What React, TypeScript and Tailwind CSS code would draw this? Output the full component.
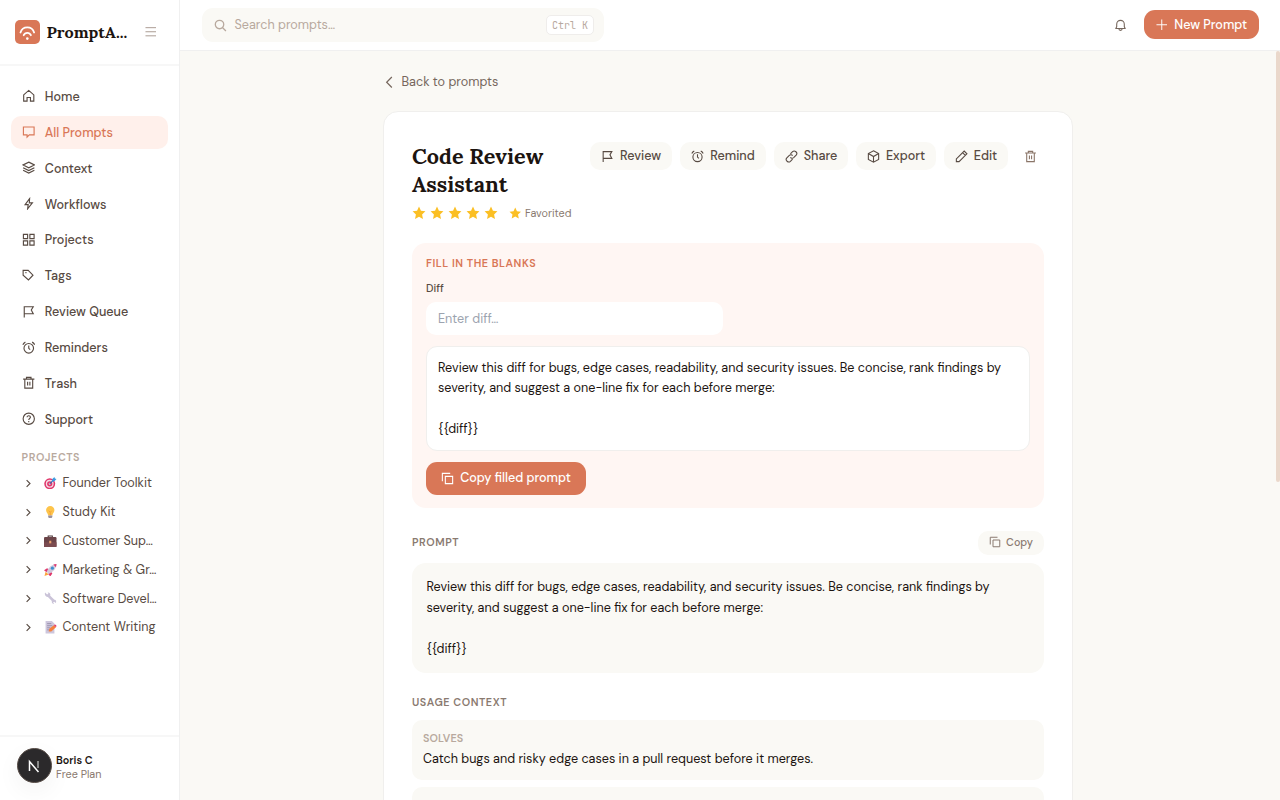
import type { ReactNode } from 'react';
import clsx from 'clsx';

const sans = "font-['DM_Sans','Inter','Liberation_Sans',sans-serif]";
const serif = "font-['Lora','DejaVu_Serif','Liberation_Serif',serif]";

const icons: Record<string, ReactNode> = {
  home: <path d="M3 10.5 12 2.500l9 8V21.500h-6v-6.500H9v6.500H3z" />,
  chat: <path d="M2.500 3.500h19v14H13l-4 4v-4H2.500z" />,
  layers: <path d="m12 2 10 5-10 5-10-5zM2 12l10 5 10-5M2 16.500l10 5 10-5" />,
  bolt: <path d="M13.500 3 5.500 13.500h5.500L10 21l8.500-10.500H13z" />,
  grid: <path d="M2.500 2.500h7.500v7.500H2.500zM14 2.500h7.500v7.500H14zM2.500 14h7.500v7.500H2.500zM14 14h7.500v7.500H14z" />,
  tag: (
    <>
      <path d="M2 2.500h9l8.500 8.500-8 8.500L2 11z" />
      <path d="M6 6.500h2" />
    </>
  ),
  flag: <path d="M4 22V3h16l-3.500 6 3.500 6.500H4" />,
  clock: (
    <>
      <circle cx="12" cy="13" r="8.500" />
      <path d="M12 8v5l2.500 2.500M1.500 6.500c1-2 2.500-3.500 4.500-4.500M22.500 6.500c-1-2-2.500-3.500-4.500-4.500" />
    </>
  ),
  trash: <path d="M2 5.500h20M5 5.500v16h14v-16M8 5.500V2.500h8v3M10 10v7M14 10v7" />,
  help: (
    <>
      <circle cx="12" cy="12" r="10" />
      <path d="M9 9.500c0-4 6-3.500 6 0 0 2-3 2.300-3 4.500M12 15.800v2.200" />
    </>
  ),
  menu: <path d="M1 3.500h22M1 12h22M1 20.500h22" />,
  search: <path d="M18 10.200a7.800 7.800 0 1 1-15.600 0 7.800 7.800 0 0 1 15.600 0zM16 16l6 6" />,
  bell: <path d="M3.500 17.500 5 14V9.500a7 7 0 0 1 14 0V14l1.500 3.500zM9 18c0 4 6 4 6 0" />,
  plus: <path d="M12 1v22M1 12h22" />,
  link: <path d="m10 7 4-4c4-3.500 10 2 7 6l-5 5c-2 1.800-4.500 1.600-6-.5M14 17l-4 4c-4 3.500-10-2-7-6l5-5c2-1.800 4.500-1.600 6 .5" />,
  box: <path d="m12 1.500 9.500 5v11l-9.500 5-9.500-5v-11zM2.500 6.500 12 12l9.500-5.500M12 12v10.500" />,
  pencil: <path d="M2.500 21.500v-5L17 2l5 5L7.500 21.500zM14 5l5 5" />,
  copy: <path d="M8 8h13.500v13.500H8zM2.500 17V2.500H17" />,
  right: <path d="m7 3 9 9-9 9" />,
  left: <path d="m17 2-10 10 10 10" />,
};

function Icon({ name, className, stroke = 2 }: { name: string; className?: string; stroke?: number }) {
  return (
    <svg viewBox="0 0 24 24" fill="none" stroke="currentColor" strokeWidth={stroke} className={clsx('shrink-0', className)}>
      {icons[name]}
    </svg>
  );
}

function Star({ className }: { className?: string }) {
  return (
    <svg viewBox="0 0 24 24" fill="#fbbf24" className={clsx('shrink-0', className)}>
      <path d="m12 1 3.300 7.200 7.700.9-5.700 5.300 1.500 7.800L12 18.300l-6.800 3.900 1.500-7.800L1 9.100l7.700-.9z" />
    </svg>
  );
}

const emojis: Record<string, ReactNode> = {
  target: (
    <>
      <circle cx="11" cy="13" r="10.500" fill="#e0376b" />
      <circle cx="11" cy="13" r="7.500" fill="#f4dbe6" />
      <circle cx="11" cy="13" r="5" fill="#e0376b" />
      <circle cx="11" cy="13" r="2" fill="#f4dbe6" />
      <path d="m11 13 7-7" stroke="#2a6cb0" strokeWidth="2" />
      <path d="m15 9 1-5 4-4 1 3 3 1-4 4z" fill="#3c9be0" />
    </>
  ),
  bulb: (
    <>
      <path d="M12 0a8 8 0 0 0-8 8c0 4 3 5 4 10h8c1-5 4-6 4-10a8 8 0 0 0-8-8z" fill="#fdc44b" />
      <path d="M9 9l3 3 3-3M12 12v6" stroke="#f59a38" strokeWidth="1.500" fill="none" />
      <path d="M8 18h8v3l-2 3h-4l-2-3z" fill="#9b929e" />
    </>
  ),
  case: (
    <>
      <path d="M8 5V2h8v3" fill="none" stroke="#4c3537" strokeWidth="2" />
      <rect y="4" width="24" height="19" rx="2" fill="#6b4448" />
      <path d="M0 14h24v9H0z" fill="#7b4b50" />
      <rect x="10" y="11" width="4" height="5" fill="#eda36e" />
    </>
  ),
  rocket: (
    <>
      <path d="m0 12 6-4 4 3-5 5zM12 24l4-6-3-4-5 5z" fill="#e0376b" />
      <path d="M5 15C9 6 15 1 24 0c-1 9-6 15-15 19z" fill="#cfc8dc" />
      <path d="M18 1l6-1-1 6z" fill="#e0376b" />
      <circle cx="16" cy="8" r="3" fill="#3c8fd0" />
      <path d="m1 23 2-8 6 5z" fill="#fba43c" />
    </>
  ),
  wrench: (
    <path d="M2 1l4 4 2.500-2L7 1c4-.5 6 3 5 6l8 8c3-.5 4.500 4 2.500 6l-3-2.500-2 1.500 2 3c-4 .5-5-3-4.500-5.500L7.500 9.500C3.500 10 .5 5 2 1z" fill="#cac3d8" />
  ),
  memo: (
    <>
      <path d="M3 0h12l5 5v19H3z" fill="#cdc6dc" />
      <path d="M6 5h8M6 9h10M6 13h6M6 17h4" stroke="#8f86a3" strokeWidth="1.500" />
      <path d="m9 20 1-5 9-7 4 4-9 8z" fill="#f5803e" />
      <path d="m19 8 2-2 3 3-1 3z" fill="#e0376b" />
    </>
  ),
};

const nav = [
  { icon: 'home', label: 'Home' },
  { icon: 'chat', label: 'All Prompts', active: true },
  { icon: 'layers', label: 'Context' },
  { icon: 'bolt', label: 'Workflows' },
  { icon: 'grid', label: 'Projects' },
  { icon: 'tag', label: 'Tags' },
  { icon: 'flag', label: 'Review Queue' },
  { icon: 'clock', label: 'Reminders' },
  { icon: 'trash', label: 'Trash' },
  { icon: 'help', label: 'Support' },
];

const projects = [
  { emoji: 'target', label: 'Founder Toolkit' },
  { emoji: 'bulb', label: 'Study Kit' },
  { emoji: 'case', label: 'Customer Sup…' },
  { emoji: 'rocket', label: 'Marketing & Gr…' },
  { emoji: 'wrench', label: 'Software Devel…' },
  { emoji: 'memo', label: 'Content Writing' },
];

const actions = [
  { icon: 'flag', label: 'Review', width: 'w-[82px]' },
  { icon: 'clock', label: 'Remind', width: 'w-[86px]' },
  { icon: 'link', label: 'Share', width: 'w-[74px]' },
  { icon: 'box', label: 'Export', width: 'w-[80px]' },
  { icon: 'pencil', label: 'Edit', width: 'w-[64px]' },
];

function PromptText() {
  return (
    <div className="whitespace-nowrap text-[12.6px] leading-[20.475px] text-[#1c1410]">
      <p>Review this diff for bugs, edge cases, readability, and security issues. Be concise, rank findings by</p>
      <p>severity, and suggest a one-line fix for each before merge:</p>
      <p>&nbsp;</p>
      <p>{'{{diff}}'}</p>
    </div>
  );
}

function Sidebar() {
  return (
    <aside className="flex w-[180px] shrink-0 flex-col border-r border-[#f0f0f0] bg-white">
      <div className="flex h-[66px] shrink-0 items-center border-b-2 border-[#f7f7f7] pl-[15px]">
        <div className="flex size-[24.500px] items-center justify-center rounded-[5px] bg-[#d97757]">
          <svg viewBox="0 0 24 24" fill="none" stroke="white" strokeWidth="1.800" strokeLinecap="round" className="size-6">
            <path d="M5.500 12.500a7.100 7.100 0 0 1 13.600 0M8.700 15.200a3.900 3.900 0 0 1 7.200 0" />
            <circle cx="12.300" cy="18.600" r="1.300" fill="white" stroke="none" />
          </svg>
        </div>
        <span className={clsx(serif, 'ml-[7px] w-[98px] text-[16.200px] font-bold text-[#1c1410]')}>PromptA...</span>
        <Icon name="menu" className="size-[11.500px] text-[#a8998f]" />
      </div>

      <nav className="mt-[14.400px] flex flex-col gap-[3.600px] px-[11px]">
        {nav.map((item) => (
          <a
            key={item.label}
            className={clsx(
              'flex h-[32.300px] items-center gap-[9.500px] rounded-[10px] pl-[10.800px] text-[12.600px] font-medium',
              item.active ? 'bg-[#fff0eb] text-[#d97757]' : 'text-[#574a42]'
            )}
          >
            <Icon name={item.icon} className="-mt-[1px] size-[13.500px]" />
            <span className="pt-[1.500px]">{item.label}</span>
          </a>
        ))}
      </nav>

      <h2 className="mt-[13px] px-[21.600px] text-[10.800px] leading-[16px] font-semibold tracking-[0.54px] text-[#b8a99e]">PROJECTS</h2>
      <ul className="mt-[4px] flex flex-col">
        {projects.map((p) => (
          <li key={p.label} className="flex h-[28.900px] items-center whitespace-nowrap text-[12.600px] text-[#574a42]">
            <Icon name="right" className="ml-[24px] size-[9px]" stroke={3} />
            <svg viewBox="0 0 24 24" className="mr-[6px] ml-[11px] size-[12.500px]">
              {emojis[p.emoji]}
            </svg>
            <span className="pt-[0.500px]">{p.label}</span>
          </li>
        ))}
      </ul>

      <div className="mt-auto flex h-[65px] items-center border-t-2 border-[#f7f7f7] pb-[6px] pl-[16.500px]">
        <div className="flex size-[35px] items-center justify-center rounded-full border border-[#5a4f49] bg-[#2b292b] shadow-[0_8px_24px_rgba(0,0,0,0.05)]">
          <svg viewBox="0 0 16 16" fill="none" className="size-4">
            <path d="M3.500 13V3.500L12.500 14" stroke="white" strokeWidth="1.500" />
            <path d="M12 3v7" stroke="#aaa" strokeWidth="1.500" />
          </svg>
        </div>
        <div className="mt-[3px] ml-[4.500px] text-[10.800px] leading-[14px]">
          <p className="font-semibold text-[#1c1410]">Boris C</p>
          <p className="text-[#8a7a70]">Free Plan</p>
        </div>
      </div>
    </aside>
  );
}

function TopBar() {
  return (
    <header className="flex h-[51px] shrink-0 items-center border-b border-[#f0f0f0] bg-white pr-[21px] pl-[21.500px]">
      <div className="flex h-[34px] w-[402.500px] items-center rounded-[11px] bg-[#faf9f5] pr-[10px] pl-[12px] text-[12.600px] text-[#b8a99e]">
        <Icon name="search" className="mr-[8px] size-[13px]" stroke={2.4} />
        <span className="grow">Search prompts…</span>
        <kbd className="flex h-[19.500px] w-[48px] items-center justify-center rounded-[5px] border border-[#efedeb] bg-white font-['JetBrains_Mono','Liberation_Mono',monospace] text-[10px]">
          Ctrl K
        </kbd>
      </div>
      <Icon name="bell" className="mr-[17px] ml-auto size-[13px] text-[#76675d]" />
      <button className="-mt-[1px] flex h-[29px] w-[115px] items-center justify-center gap-[7px] rounded-[11px] bg-[#d97757] text-[12.600px] font-medium whitespace-nowrap text-white">
        <Icon name="plus" className="size-[11.500px]" />
        <span className="pt-[1px]">New Prompt</span>
      </button>
    </header>
  );
}

function DetailHeader() {
  return (
    <div className="flex h-[101px] items-start justify-between">
      <div>
        <h1 className={clsx(serif, 'w-[170px] text-[21.600px] leading-[28px] font-bold text-[#1c1410]')}>
          Code Review
          <br />
          Assistant
        </h1>
        <div className="mt-[8px] flex items-center gap-[4px]">
          {[1, 2, 3, 4, 5].map((n) => (
            <Star key={n} className="size-[14px]" />
          ))}
          <Star className="ml-[7px] size-[12.500px]" />
          <span className="-ml-[0.500px] text-[10.800px] leading-[14px] text-[#8a7a70]">Favorited</span>
        </div>
      </div>
      <div className="flex gap-2">
        {actions.map((a) => (
          <button
            key={a.label}
            className={clsx(
              'flex h-[28px] items-center justify-center gap-[6px] rounded-[10px] bg-[#faf9f5] text-[12.600px] font-medium text-[#574a42]',
              a.width
            )}
          >
            <Icon name={a.icon} className="size-[13px]" />
            {a.label}
          </button>
        ))}
        <button className="flex h-[28px] w-[28px] items-center justify-center text-[#8a7568]">
          <Icon name="trash" className="size-[13px]" />
        </button>
      </div>
    </div>
  );
}

export default function App() {
  return (
    <div className={clsx(sans, 'flex h-[800px] w-[1280px] overflow-hidden bg-[#faf9f5]')}>
      <Sidebar />
      <div className="flex min-w-0 grow flex-col">
        <TopBar />
        <div className="flex min-h-0 grow">
          <main className="flex min-w-0 grow justify-center overflow-hidden pt-[21px]">
            <div className="w-[690px]">
              <a className="flex h-[20px] items-center gap-[6px] text-[12.600px] text-[#76675d]">
                <Icon name="left" className="size-[12.500px]" stroke={2.3} />
                Back to prompts
              </a>

              <article className="mt-[19px] h-[800px] rounded-[15px] border border-[#f0efed] bg-white px-[28px] pt-[30px]">
                <DetailHeader />

                {/* Template variables */}
                <section className="h-[265px] rounded-[14px] bg-[#fff6f3] px-[14px] pt-[13px]">
                  <h2 className="text-[10.800px] leading-[14px] font-semibold tracking-[0.54px] text-[#d97757]">FILL IN THE BLANKS</h2>
                  <p className="mt-[11px] text-[10.800px] leading-[14px] font-medium text-[#574a42]">Diff</p>
                  <div className="mt-[7px] flex h-[33px] w-[297px] items-center rounded-[10px] bg-white pt-[1px] pl-[12px] text-[12.600px] text-[#9ca3af]">
                    Enter diff…
                  </div>
                  <div className="mt-[11px] h-[105px] rounded-[11px] border border-[#f0efed] bg-white pt-[10.500px] pl-[11px]">
                    <PromptText />
                  </div>
                  <button className="mt-[10.500px] flex h-[33px] w-[160px] items-center justify-center gap-[6px] rounded-[11px] bg-[#d97757] text-[12.600px] font-medium whitespace-nowrap text-white">
                    <Icon name="copy" className="size-[13px]" />
                    Copy filled prompt
                  </button>
                </section>

                <section className="pt-[22.500px]">
                  <div className="flex h-[24.500px] items-center justify-between">
                    <h2 className="pb-[1px] text-[10.800px] font-semibold tracking-[0.54px] text-[#8a7a70]">PROMPT</h2>
                    <button className="flex h-[24.500px] w-[66px] items-center justify-center gap-[5px] rounded-[10px] bg-[#faf9f5] pb-[1px] text-[10.800px] font-medium text-[#8a7a70]">
                      <Icon name="copy" className="size-[12px]" />
                      Copy
                    </button>
                  </div>
                  <div className="mt-[7.500px] h-[110px] rounded-[14px] bg-[#faf9f5] pt-[14.600px] pl-[14.400px]">
                    <PromptText />
                  </div>
                </section>

                <section className="pt-[22.500px]">
                  <h2 className="text-[10.800px] leading-[14px] font-semibold tracking-[0.54px] text-[#8a7a70]">USAGE CONTEXT</h2>
                  <div className="mt-[11px] h-[60px] rounded-[10px] bg-[#faf9f5] px-[11px] pt-[11px]">
                    <h3 className="text-[10.800px] leading-[14px] font-semibold tracking-[0.1px] text-[#b8a99e]">SOLVES</h3>
                    <p className="mt-[4px] text-[12.600px] leading-[20px] text-[#1c1410]">
                      Catch bugs and risky edge cases in a pull request before it merges.
                    </p>
                  </div>
                  <div className="mt-[7px] h-[60px] rounded-[10px] bg-[#faf9f5]" />
                </section>
              </article>
            </div>
          </main>
          <div className="h-[431px] w-[4px] shrink-0 rounded-full bg-[#ead8cb]" />
        </div>
      </div>
    </div>
  );
}
